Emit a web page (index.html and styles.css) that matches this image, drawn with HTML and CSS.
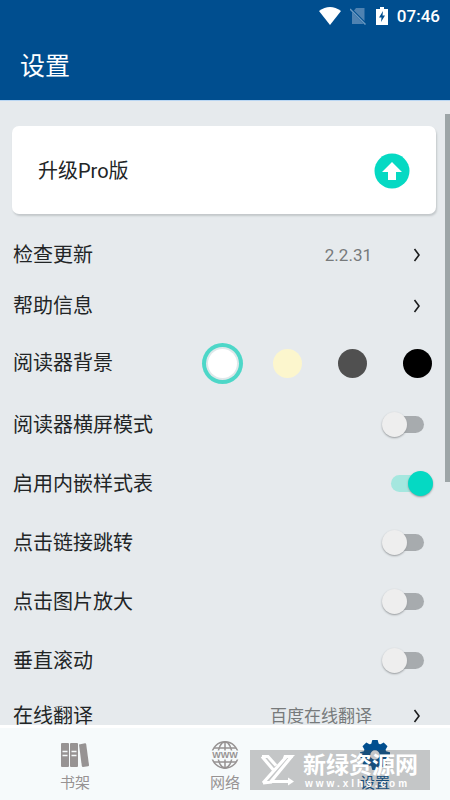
FILE: index.html
```html
<!DOCTYPE html>
<html lang="zh-CN">
<head>
<meta charset="utf-8">
<meta name="viewport" content="width=device-width, initial-scale=1">
<title>设置</title>
<link rel="stylesheet" href="styles.css">
</head>
<body>
<div class="app">
  <header class="header">
    <div class="status">
      <svg width="22" height="18" viewBox="0 0 22 18" aria-hidden="true"><path d="M0 4Q11-4 22 4L11 18Z" fill="#fff"/></svg>
      <svg width="17" height="18" viewBox="0 0 17 18" aria-hidden="true"><path d="M6 1h8.500v13L4 3.500ZM2 5l11.500 12H2Z" fill="#4f82b1"/><path d="M0 2l15.500 15.500" stroke="#6c99c2" stroke-width="1.500"/></svg>
      <svg width="12" height="18" viewBox="0 0 12 18" aria-hidden="true"><path d="M4 0h4v2h4v16H0V2h4Z" fill="#fff"/><path d="M7 4L3 10.500h2.500L5 15l4-6.500H6.500Z" fill="#004e8f"/></svg>
      <time class="clock">07:46</time>
    </div>
    <h1 class="title">设置</h1>
  </header>

  <main class="content">
    <button class="card" type="button">
      <span>升级Pro版</span>
      <svg width="36" height="36" viewBox="0 0 36 36" aria-hidden="true"><circle cx="18" cy="18" r="17.500" fill="#05d9c3"/><path d="M18 9l10 10h-6v8h-8v-8H8Z" fill="#fff"/></svg>
    </button>

    <button class="row" type="button">
      <span>检查更新</span><span class="value">2.2.31</span>
      <svg class="chevron" viewBox="0 0 8 14" aria-hidden="true"><path d="M1.500 1L6 7l-4.500 6"/></svg>
    </button>
    <button class="row" type="button">
      <span>帮助信息</span><span class="value"></span>
      <svg class="chevron" viewBox="0 0 8 14" aria-hidden="true"><path d="M1.500 1L6 7l-4.500 6"/></svg>
    </button>
    <div class="row row-colors" role="radiogroup" aria-labelledby="bg-label">
      <span id="bg-label">阅读器背景</span>
      <div class="swatches">
        <input class="swatch white" type="radio" name="bg" aria-label="白色" checked>
        <input class="swatch cream" type="radio" name="bg" aria-label="米色">
        <input class="swatch gray" type="radio" name="bg" aria-label="灰色">
        <input class="swatch black" type="radio" name="bg" aria-label="黑色">
      </div>
    </div>
    <label class="row row-switch"><span>阅读器横屏模式</span><input class="switch" type="checkbox"></label>
    <label class="row row-switch"><span>启用内嵌样式表</span><input class="switch" type="checkbox" checked></label>
    <label class="row row-switch"><span>点击链接跳转</span><input class="switch" type="checkbox"></label>
    <label class="row row-switch"><span>点击图片放大</span><input class="switch" type="checkbox"></label>
    <label class="row row-switch"><span>垂直滚动</span><input class="switch" type="checkbox"></label>
    <button class="row" type="button">
      <span>在线翻译</span><span class="value">百度在线翻译</span>
      <svg class="chevron" viewBox="0 0 8 14" aria-hidden="true"><path d="M1.500 1L6 7l-4.500 6"/></svg>
    </button>
    <div class="scrollbar"></div>
  </main>

  <nav class="tabs">
    <a class="tab" href="#shelf">
      <svg width="30" height="30" viewBox="0 0 30 30" aria-hidden="true">
        <g fill="#979393"><rect x="1" y="3" width="8" height="24" rx="1"/><rect x="10" y="3" width="8" height="24" rx="1"/><path d="M19 4.500l6-1.200q1-.1 1.200.9L29 25q.1 1-.9 1.200L23 27q-1 0-1.200-1Z"/></g>
        <path d="M2.500 11.500h5M2.500 15.500h5M11.500 11.500h5M11.500 15.500h5" stroke="#f6fafb" stroke-width="1.300"/>
      </svg>
      <span>书架</span>
    </a>
    <a class="tab" href="#web">
      <svg width="30" height="30" viewBox="0 0 30 30" aria-hidden="true">
        <g fill="none" stroke="#979393" stroke-width="1.500"><circle cx="15" cy="15" r="13.200"/><ellipse cx="15" cy="15" rx="7" ry="13"/><path d="M15 2v26M4 8h22M4 22h22"/></g>
        <path d="M1 10.500h28v9H1Z" fill="#f6fafb"/>
        <text class="globe-text" x="15" y="18" text-anchor="middle">WWW</text>
      </svg>
      <span>网络</span>
    </a>
    <a class="tab active" href="#settings" aria-current="page">
      <svg width="30" height="30" viewBox="0 0 30 30" aria-hidden="true">
        <circle cx="15" cy="15" r="8.200" fill="none" stroke="#004e8f" stroke-width="7"/>
        <g fill="#004e8f"><path id="tooth" d="M11 5l1.300-5h5.400L19 5Z"/><use href="#tooth" transform="rotate(45 15 15)"/><use href="#tooth" transform="rotate(90 15 15)"/><use href="#tooth" transform="rotate(135 15 15)"/><use href="#tooth" transform="rotate(180 15 15)"/><use href="#tooth" transform="rotate(225 15 15)"/><use href="#tooth" transform="rotate(270 15 15)"/><use href="#tooth" transform="rotate(315 15 15)"/></g>
      </svg>
      <span>设置</span>
    </a>
  </nav>

  <div class="watermark">
    <svg width="40" height="32" viewBox="0 0 40 32" aria-hidden="true">
      <path d="M3 2.500l11 13M3 2.500h6l8 9M28 2L4 29M33 2L12 27.500h18M4 29l9-1" fill="none" stroke="#fff" stroke-width="3.200"/>
      <path d="M25 1h11l-3 3h-9ZM29 23.500l6 4-6 4Z" fill="#fff"/>
    </svg>
    <div class="brand"><strong>新绿资源网</strong><span class="domain">www.xlhs.com</span></div>
  </div>
</div>
</body>
</html>
```
FILE: styles.css
```css
* { box-sizing: border-box; }

body {
  margin: 0;
  font-family: Roboto, "Noto Sans CJK SC", sans-serif;
  font-size: 20px;
  line-height: 28px;
  color: #222526;
}

button { font: inherit; color: inherit; border: 0; cursor: pointer; }

.app {
  position: relative;
  display: flex;
  flex-direction: column;
  height: 100vh;
  background: #e6eaed;
}

.header { flex: none; background: #004e8f; color: #fff; }

.status {
  display: flex;
  align-items: center;
  justify-content: flex-end;
  gap: 8px;
  height: 32px;
  padding: 0 10px;
}

.status svg { margin-right: 1px; }
.clock { font-size: 17px; font-weight: 500; }

.title {
  margin: 0;
  padding: 17px 20px 15px;
  font-size: 25px;
  font-weight: 400;
  line-height: 36px;
}

.content {
  position: relative;
  flex: 1;
  min-height: 0;
  overflow: hidden;
  padding: 25px 14px 0 12px;
  border-top: 1px solid #b9d6f3;
}

.card {
  display: flex;
  align-items: center;
  justify-content: space-between;
  width: 100%;
  height: 88px;
  margin-bottom: 15px;
  padding: 2px 26px 0;
  background: #fff;
  border-radius: 7px;
  box-shadow: 1px 2px 2px #c3c8cb;
}

.row {
  display: flex;
  align-items: center;
  justify-content: space-between;
  width: 100%;
  height: 51px;
  padding: 0 15px 0 1px;
  background: none;
}

.value { margin-left: auto; margin-right: 41px; font-size: 17px; color: #777a7b; }

.chevron {
  width: 8px;
  height: 14px;
  fill: none;
  stroke: #1b1d1e;
  stroke-width: 1.6;
}

.row-colors { height: 64px; padding-right: 4px; }
.swatches { display: flex; gap: 36px; }

.swatch {
  appearance: none;
  width: 29px;
  height: 29px;
  margin: 0;
  border-radius: 50%;
}

.swatch:checked { box-shadow: 0 0 0 2px #dfe8ea, 0 0 0 6px #4dd7c8; }
.white { background: #fff; }
.cream { background: #fcf6cd; }
.gray { background: #505050; }
.black { background: #000; }

.row-switch { height: 59px; padding-right: 12px; }

.switch {
  appearance: none;
  position: relative;
  width: 33px;
  height: 17px;
  margin: 0;
  border-radius: 9px;
  background: #a7abae;
}

.switch::before {
  content: "";
  position: absolute;
  top: -4px;
  left: -9px;
  width: 25px;
  height: 25px;
  border-radius: 50%;
  background: #eeeeee;
  box-shadow: 0 1px 2px #969a9d;
}

.switch:checked { background: #a5e7df; }
.switch:checked::before { left: 17px; background: #05d9c3; }

.scrollbar {
  position: absolute;
  top: 13px;
  right: 0;
  width: 5px;
  height: 59%;
  background: #9da5a7;
}

.tabs {
  flex: none;
  display: flex;
  height: 75px;
  border-top: 3px solid #fff;
  background: #f6fafb;
}

.tab {
  flex: 1;
  display: flex;
  flex-direction: column;
  align-items: center;
  gap: 2px;
  padding-top: 12px;
  font-size: 15px;
  line-height: 22px;
  color: #979393;
  text-decoration: none;
}

.active { color: #004e8f; }
.globe-text { font: bold 9px "Liberation Sans", sans-serif; fill: #979393; }

.watermark {
  position: absolute;
  right: 20px;
  bottom: 10px;
  display: flex;
  align-items: center;
  gap: 4px;
  width: 180px;
  height: 40px;
  padding-left: 9px;
  background: rgba(80, 80, 80, 0.3);
  color: #fff;
  pointer-events: none;
}

.brand { display: flex; flex-direction: column; padding-top: 3px; }
.brand strong { font-size: 23px; line-height: 25px; }
.domain { padding-left: 2px; font: bold 10px/12px "Liberation Sans", sans-serif; letter-spacing: 3px; }
```
